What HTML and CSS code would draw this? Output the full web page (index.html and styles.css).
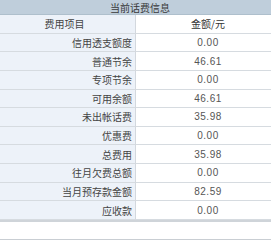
FILE: index.html
```html
<!DOCTYPE html>
<html lang="zh">
<head>
<meta charset="utf-8">
<link rel="stylesheet" href="styles.css">
</head>
<body>
<div class="panel">
  <div class="title">当前话费信息</div>
  <div class="grid">
    <div class="cell label head">费用项目</div><div class="cell value head">金额/元</div>
    <div class="cell label">信用透支额度</div><div class="cell value num">0.00</div>
    <div class="cell label">普通节余</div><div class="cell value num">46.61</div>
    <div class="cell label">专项节余</div><div class="cell value num">0.00</div>
    <div class="cell label">可用余额</div><div class="cell value num">46.61</div>
    <div class="cell label">未出帐话费</div><div class="cell value num">35.98</div>
    <div class="cell label">优惠费</div><div class="cell value num">0.00</div>
    <div class="cell label">总费用</div><div class="cell value num">35.98</div>
    <div class="cell label">往月欠费总额</div><div class="cell value num">0.00</div>
    <div class="cell label">当月预存款金额</div><div class="cell value num">82.59</div>
    <div class="cell label">应收款</div><div class="cell value num">0.00</div>
  </div>
  <div class="footer"></div>
</div>
</body>
</html>
```
FILE: styles.css
```css
html, body {
  margin: 0;
  padding: 0;
  background: #ffffff;
}
.panel {
  width: 271px;
  font-family: "Noto Sans CJK SC", "Liberation Sans", sans-serif;
  font-size: 10px;
  color: #333;
}
.title {
  height: 15px;
  line-height: 15px;
  background: #bfcedb;
  text-align: center;
  padding-left: 9px;
  color: #3a3a3a;
  border-bottom: 1px solid #aebfcc;
  box-sizing: border-box;
}
.grid {
  display: grid;
  grid-template-columns: 136px 1fr;
  grid-auto-rows: 18.64px;
  border-bottom: 2px solid #cfd4d9;
}
.cell {
  display: flex;
  align-items: center;
  box-sizing: border-box;
  border-bottom: 1px solid #d6dbe0;
}
.label {
  background: #edf2f9;
  justify-content: flex-end;
  padding-right: 3px;
  border-right: 1px solid #d3d8de;
  color: #444;
}
.label.head {
  justify-content: center;
  padding-right: 6px;
}
.value {
  background: #ffffff;
  justify-content: center;
  padding-left: 9px;
}
.num {
  font-family: "Liberation Sans", Arial, sans-serif;
  font-size: 10px;
  letter-spacing: 0.5px;
  color: #555;
}
.footer {
  height: 17px;
  border-bottom: 1px solid #c9ced3;
}
```
